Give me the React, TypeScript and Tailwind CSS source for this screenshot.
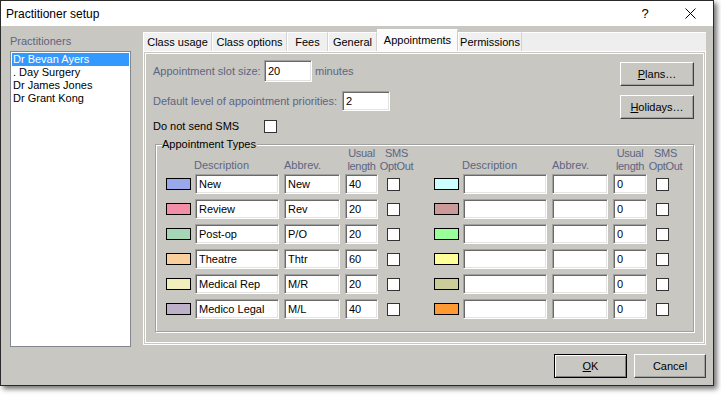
import React from "react";

const LABEL = "text-[#5d6583]";

function Field({ w, h, value }: { w: string; h: string; value?: string }) {
  return (
    <div
      className={`${w} ${h} shrink-0 bg-white border border-t-[#a0a0a0] border-l-[#a0a0a0] border-r-white border-b-white shadow-[inset_1px_1px_0_#696969,inset_-1px_-1px_0_#e3e3e3] flex items-center pl-[3px] pt-[1px] text-[11px] text-black leading-none`}
    >
      {value}
    </div>
  );
}

function Check() {
  return <div className="w-[13px] h-[13px] shrink-0 bg-white border border-[#333333]" />;
}

function Swatch({ color }: { color: string }) {
  return <div className="w-[25px] h-[12px] shrink-0 border border-black mr-[4px]" style={{ backgroundColor: color }} />;
}

function Half({ color, desc, abbr, len, lw }: { color: string; desc: string; abbr: string; len: string; lw: string }) {
  return (
    <div className="flex items-center">
      <Swatch color={color} />
      <div className="mr-[5px]">
        <Field w="w-[84px]" h="h-[20px]" value={desc} />
      </div>
      <div className="mr-[5px]">
        <Field w="w-[56px]" h="h-[20px]" value={abbr} />
      </div>
      <div className="mr-[9px]">
        <Field w={lw} h="h-[20px]" value={len} />
      </div>
      <Check />
    </div>
  );
}

function HeadHalf({ lw }: { lw: string }) {
  return (
    <div className={`flex items-end text-[11px] leading-[13px] ${LABEL}`}>
      <div className="w-[29px] shrink-0" />
      <div className="w-[89px] shrink-0 mb-[1px] -ml-[1px]">Description</div>
      <div className="w-[61px] shrink-0 mb-[1px] ml-[1px]">Abbrev.</div>
      <div className={`${lw} shrink-0 mr-[9px] flex flex-col items-center whitespace-nowrap tracking-[-0.3px]`}>
        <span>Usual</span>
        <span>length</span>
      </div>
      <div className="w-[13px] shrink-0 pl-[6px] flex flex-col items-center whitespace-nowrap tracking-[-0.3px]">
        <span>SMS</span>
        <span>OptOut</span>
      </div>
    </div>
  );
}

function Btn({ children, def, w }: { children: React.ReactNode; def?: boolean; w: string }) {
  return (
    <div
      className={
        def
          ? `${w} h-[24px] border border-black shadow-[inset_1px_1px_0_#ffffff,inset_-1px_-1px_0_#808080] flex items-center justify-center text-[11px] text-black`
          : `${w} h-[24px] border border-t-white border-l-white border-r-[#404040] border-b-[#404040] shadow-[inset_-1px_-1px_0_#a0a0a0] flex items-center justify-center text-[11px] text-black`
      }
    >
      {children}
    </div>
  );
}

const leftRows = [
  ["#99a8ea", "New", "New", "40"],
  ["#f28fa7", "Review", "Rev", "20"],
  ["#a5d6b5", "Post-op", "P/O", "20"],
  ["#f9d09c", "Theatre", "Thtr", "60"],
  ["#f2efbd", "Medical Rep", "M/R", "20"],
  ["#bdb0c9", "Medico Legal", "M/L", "40"],
];
const rightColors = ["#ccffff", "#cc9999", "#99ff99", "#ffff99", "#cccc99", "#ff9933"];

const tabs = [
  { t: "Class usage", w: "w-[69px]" },
  { t: "Class options", w: "w-[75px]" },
  { t: "Fees", w: "w-[41px]" },
  { t: "General", w: "w-[49px]" },
  { t: "Appointments", w: "w-[81px]", active: true },
  { t: "Permissions", w: "w-[64px]" },
];

export default function App() {
  return (
    <div className="w-[721px] h-[395px] bg-white overflow-hidden font-['Liberation_Sans',Arial,sans-serif]">
      <div className="w-[714px] h-[386px] border border-[#2a2a2a] bg-[#c8c7c1] flex flex-col shadow-[3px_3px_5px_rgba(0,0,0,0.55)]">
        {/* Title bar */}
        <div className="h-[25px] bg-white flex items-center">
          <div className="pl-[5px] text-[12px] text-black flex-1">Practitioner setup</div>
          <div className="w-[46px] h-full flex items-center justify-center text-[13px] text-black">?</div>
          <div className="w-[45px] h-full flex items-center justify-center">
            <svg width="11" height="11" viewBox="0 0 11 11">
              <path d="M0.5 0.5 L10.5 10.5 M10.5 0.5 L0.5 10.5" stroke="#000" strokeWidth="1" />
            </svg>
          </div>
        </div>

        {/* Body */}
        <div className="flex-1 flex flex-col pl-[9px] pr-[7px] pt-[3px]">
          <div className="flex gap-[12px]">
            {/* Left column */}
            <div className="w-[121px] flex flex-col">
              <div className={`h-[22px] flex items-center text-[11px] ${LABEL} pt-[3px]`}>Practitioners</div>
              <div className="h-[296px] bg-white border border-[#828790] p-[1px] flex flex-col text-[11px] leading-[13px]">
                <div className="h-[13px] bg-[#3399ff] text-white px-[1px]">Dr Bevan Ayers</div>
                <div className="h-[13px] text-black px-[1px]">. Day Surgery</div>
                <div className="h-[13px] text-black px-[1px]">Dr James Jones</div>
                <div className="h-[13px] text-black px-[1px]">Dr Grant Kong</div>
              </div>
            </div>

            {/* Tab control */}
            <div className="w-[563px] flex flex-col">
              <div className="h-[22px] flex items-end text-[11px] text-black">
                {tabs.map((tb) =>
                  tb.active ? (
                    <div
                      key={tb.t}
                      className={`${tb.w} h-[22px] bg-[#fbfbfb] border-t border-l border-r border-t-white border-l-white border-r-[#cfcfcf] flex items-center justify-center pb-[1px]`}
                    >
                      {tb.t}
                    </div>
                  ) : (
                    <div
                      key={tb.t}
                      className={`${tb.w} h-[19px] bg-[#f0f0f0] border-t border-l border-r border-t-white border-l-white border-r-[#d3d3d3] flex items-center justify-center`}
                    >
                      {tb.t}
                    </div>
                  )
                )}
                <div className="flex-1 h-[19px] bg-[#eeeeee] border-t border-white" />
              </div>

              {/* Page */}
              <div className="h-[294px] border-[3px] border-double border-white flex flex-col">
                <div className="flex justify-between items-start pl-[7px] pr-[9px]">
                  <div className="flex flex-col pt-[6px] text-[11px]">
                    <div className="h-[22px] flex items-center">
                      <div className={`w-[111px] ${LABEL}`}>Appointment slot size:</div>
                      <Field w="w-[48px]" h="h-[22px]" value="20" />
                      <div className={`ml-[3px] ${LABEL}`}>minutes</div>
                    </div>
                    <div className="h-[20px] mt-[9px] flex items-center">
                      <div className={`w-[189px] ${LABEL}`}>Default level of appointment priorities:</div>
                      <Field w="w-[48px]" h="h-[20px]" value="2" />
                    </div>
                    <div className="h-[14px] mt-[8px] flex items-center">
                      <div className="w-[111px] text-black">Do not send SMS</div>
                      <Check />
                    </div>
                  </div>
                  <div className="flex flex-col gap-[9px] pt-[8px]">
                    <Btn w="w-[74px]">
                      <span>
                        <u>P</u>lans…
                      </span>
                    </Btn>
                    <Btn w="w-[74px]">
                      <span>
                        <u>H</u>olidays…
                      </span>
                    </Btn>
                  </div>
                </div>

                {/* Group box */}
                <div className="relative ml-[9px] mt-[11px] w-[539px] h-[188px] border border-[#a0a0a0] shadow-[inset_1px_1px_0_#ffffff,1px_1px_0_#ffffff] pl-[10px] pt-[2px]">
                  <div className="absolute -top-[7px] left-[6px] bg-[#c8c7c1] text-[11px] leading-[13px] text-black pr-[1px]">
                    Appointment Types
                  </div>
                  <div className="flex gap-[34px] h-[26px]">
                    <HeadHalf lw="w-[33px]" />
                    <HeadHalf lw="w-[34px]" />
                  </div>
                  <div className="flex flex-col gap-[5px] mt-[1px]">
                    {leftRows.map((r, i) => (
                      <div key={i} className="flex gap-[34px]">
                        <Half color={r[0]} desc={r[1]} abbr={r[2]} len={r[3]} lw="w-[33px]" />
                        <Half color={rightColors[i]} desc="" abbr="" len="0" lw="w-[34px]" />
                      </div>
                    ))}
                  </div>
                </div>
              </div>
            </div>
          </div>

          {/* Bottom buttons */}
          <div className="flex justify-end gap-[7px] mt-[7px]">
            <Btn def w="w-[73px]">
              <span>
                <u>O</u>K
              </span>
            </Btn>
            <Btn w="w-[72px]">Cancel</Btn>
          </div>
        </div>
      </div>
    </div>
  );
}
